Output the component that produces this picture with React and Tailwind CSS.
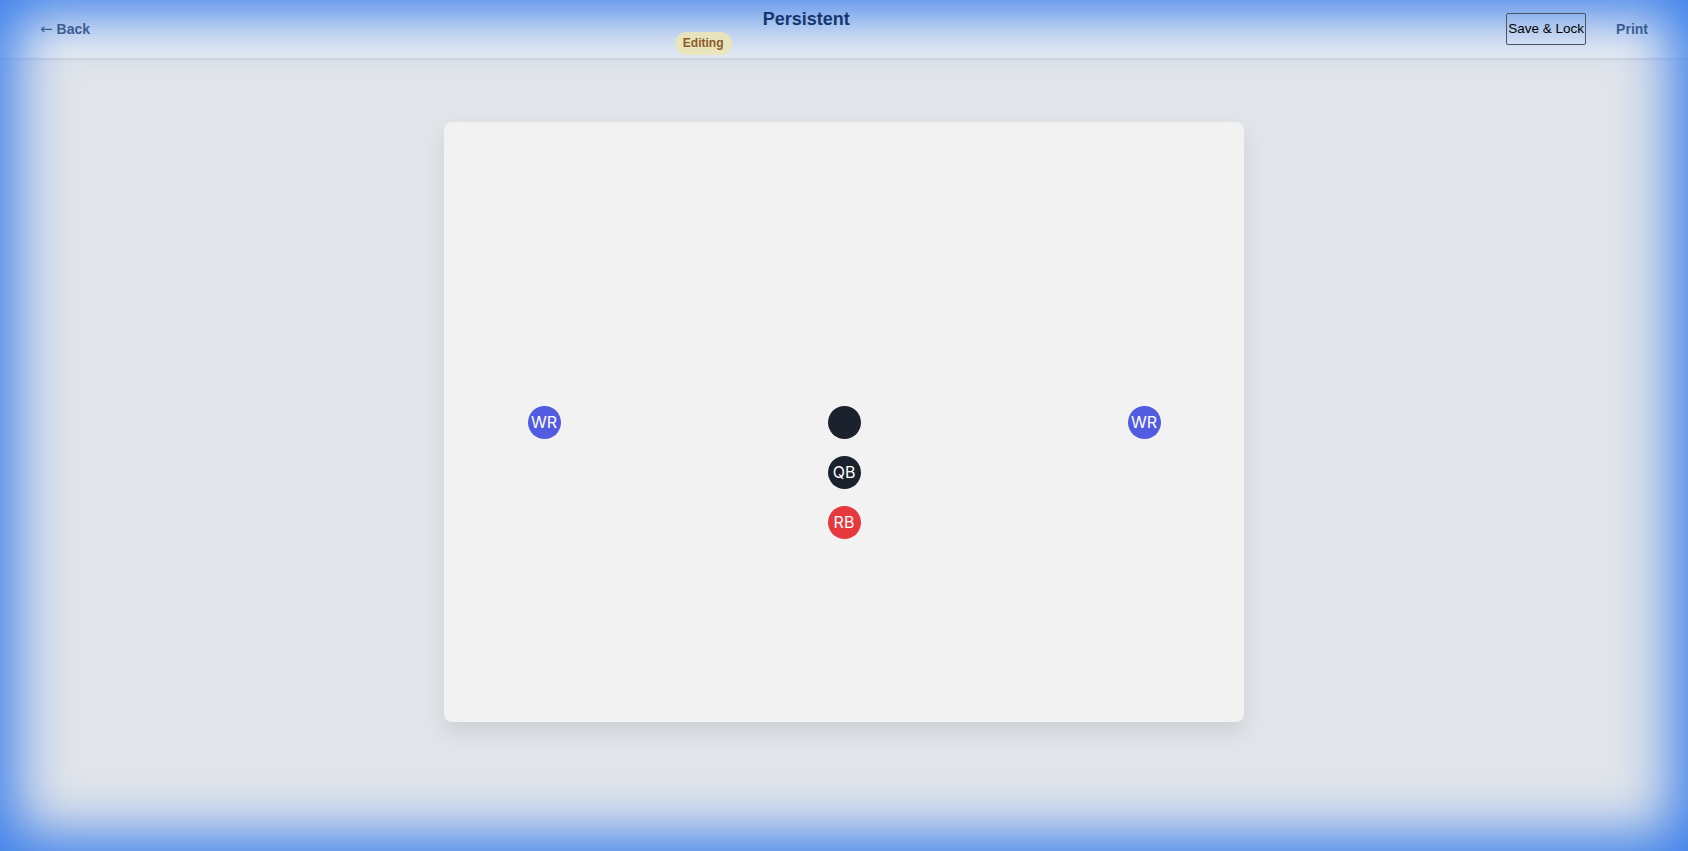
import { useState } from 'react'

const players = [
  { id: 'wr1', label: 'WR', x: 100, y: 300, color: 'bg-[#525ce0]' },
  { id: 'c', label: '', x: 400, y: 300, color: 'bg-[#1b222d]' },
  { id: 'qb', label: 'QB', x: 400, y: 350, color: 'bg-[#1b222d]' },
  { id: 'rb', label: 'RB', x: 400, y: 400, color: 'bg-[#e5393e]' },
  { id: 'wr2', label: 'WR', x: 700, y: 300, color: 'bg-[#525ce0]' },
]

export default function App() {

  const [locked, setLocked] = useState(false)

  return (
    <div className="relative h-screen flex flex-col overflow-hidden bg-[#e2e5ea] font-['Liberation_Sans',Arial,sans-serif]">

      {/* HEADER */}
      <header className="h-[59px] shrink-0 flex items-center justify-between px-10 bg-white/40 border-b border-[#d3d6dc] shadow-[0_1px_2px_rgba(0,0,0,0.05)]">

        <button className="relative z-10 text-sm font-bold text-[#3d5d92]">
          <span className="mr-1 font-normal text-[15px] leading-none font-['DejaVu_Sans',sans-serif]">←</span>Back
        </button>

        <div className="relative z-10 flex-1 flex flex-col items-center pl-4">
          <h1 className="pt-[5px] text-lg leading-[22px] font-bold text-[#163670]">
            Persistent
          </h1>
          <div className="mr-[206px]">
            <span className="inline-block rounded-full bg-[#ebe4b6]/90 px-2 py-1 text-xs leading-[15px] font-bold text-[#8b5a2b]">
              {locked ? 'Locked' : 'Editing'}
            </span>
          </div>
        </div>

        <div className="relative z-10 flex items-center gap-[30px]">
          <button
            onClick={() => setLocked(!locked)}
            className="h-8 px-px border border-[#4b5563] rounded-[2px] text-[13.5px] text-black"
          >
            Save &amp; Lock
          </button>
          <button className="text-sm font-bold text-[#3d5d92]">
            Print
          </button>
        </div>

      </header>

      {/* FIELD */}
      <main className="flex-1 flex justify-center pt-[63px]">
        <div className="relative w-[800px] h-[600px] rounded-lg bg-[#f2f2f2] shadow-[0_10px_24px_rgba(0,0,0,0.1)]">
          {players.map((p) => (
            <div
              key={p.id}
              className={`absolute w-[33px] h-[33px] -ml-[16.5px] -mt-[16.5px] rounded-full ${p.color} flex items-center justify-center text-white text-base font-normal font-['Inter',sans-serif]`}
              style={{ left: p.x, top: p.y }}
            >
              {p.label}
            </div>
          ))}
        </div>
      </main>

      {/* VIGNETTE (under header text) */}
      <div className="pointer-events-none absolute inset-0 z-[5] shadow-[inset_0_0_55px_16px_#3b7fea]" />

    </div>
  )
}
